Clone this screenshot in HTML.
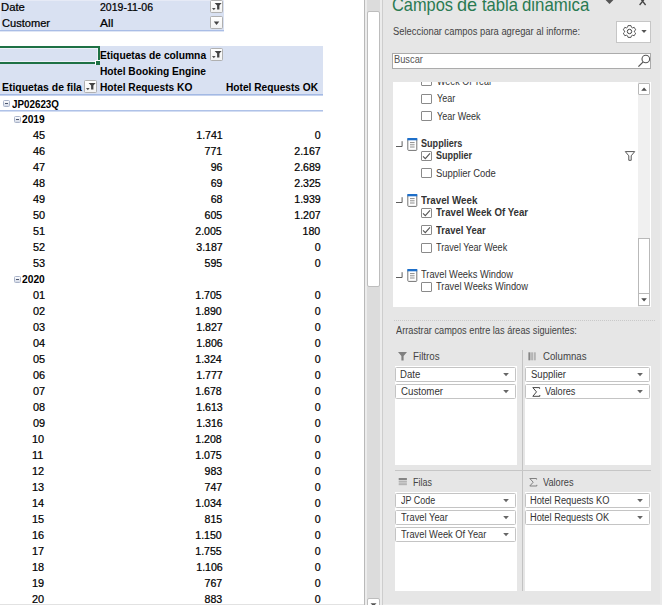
<!DOCTYPE html>
<html><head><meta charset="utf-8"><title>Pivot</title>
<style>
html,body{margin:0;padding:0;background:#fff;}
body{width:662px;height:605px;position:relative;overflow:hidden;font-family:"Liberation Sans",sans-serif;}
.b{position:absolute;}
.t{position:absolute;white-space:nowrap;line-height:16px;height:16px;display:block;}
</style></head><body>
<div class="b" style="left:0px;top:0px;width:224px;height:30px;background:#d9e1f2;"></div>
<div class="b" style="left:0px;top:30px;width:224px;height:1px;background:#a9bde6;"></div>
<div class="b" style="left:0px;top:31px;width:224px;height:1px;background:#dfe6f5;"></div>
<div class="b" style="left:0px;top:0px;width:224px;height:1px;background:#e6eaf6;"></div>
<div class="b" style="left:0px;top:1px;width:1px;height:29px;background:#e3e8f5;"></div>
<div class="b" style="left:0px;top:64px;width:1px;height:30px;background:#e3e8f5;"></div>
<div class="b" style="left:0px;top:604px;width:364px;height:1px;background:#e2e2e2;"></div>
<div class="b" style="left:0px;top:46px;width:323px;height:48px;background:#d9e1f2;"></div>
<div class="b" style="left:0px;top:94px;width:323px;height:1px;background:#a3b9e4;"></div>
<div class="b" style="left:0px;top:95px;width:323px;height:1px;background:#c6d3ee;"></div>
<div class="b" style="left:0px;top:110px;width:323px;height:1px;background:#afc2e8;"></div>
<div class="b" style="left:0px;top:111px;width:323px;height:1px;background:#d3ddf2;"></div>
<div class="b" style="left:0px;top:48px;width:98px;height:1px;background:#eef1f9;"></div>
<div class="b" style="left:97px;top:48px;width:1px;height:13px;background:#eef1f9;"></div>
<div class="b" style="left:0px;top:61px;width:97px;height:1px;background:#eef1f9;"></div>
<div class="b" style="left:0px;top:46px;width:100px;height:2px;background:#1e7145;"></div>
<div class="b" style="left:98px;top:46px;width:2px;height:14px;background:#1e7145;"></div>
<div class="b" style="left:0px;top:62px;width:95px;height:2px;background:#1e7145;"></div>
<div class="b" style="left:95px;top:60px;width:5px;height:5px;background:#fff;"></div>
<div class="b" style="left:96px;top:61px;width:4px;height:4px;background:#1e7145;"></div>
<div class="b" style="left:98px;top:46px;width:2px;height:14px;background:#1e7145;"></div>
<div class="b" style="left:0px;top:62px;width:95px;height:2px;background:#1e7145;"></div>
<span class="t" style="left:1.27px;top:0.00px;font-size:10.3px;color:#000;transform:scaleX(1.0951);transform-origin:0 0;-webkit-text-stroke:0.22px #000;">Date</span>
<span class="t" style="left:1.64px;top:16.00px;font-size:10.3px;color:#000;transform:scaleX(1.0762);transform-origin:0 0;-webkit-text-stroke:0.22px #000;">Customer</span>
<span class="t" style="left:99.97px;top:0.00px;font-size:10.3px;color:#000;transform:scaleX(1.0206);transform-origin:0 0;-webkit-text-stroke:0.22px #000;">2019-11-06</span>
<span class="t" style="left:100.48px;top:16.00px;font-size:10.3px;color:#000;transform:scaleX(1.1641);transform-origin:0 0;-webkit-text-stroke:0.22px #000;">All</span>
<span class="t" style="left:99.81px;top:48.00px;font-size:10.3px;font-weight:bold;color:#000;transform:scaleX(0.9969);transform-origin:0 0;">Etiquetas de columna</span>
<span class="t" style="left:99.82px;top:64.00px;font-size:10.3px;font-weight:bold;color:#000;transform:scaleX(0.9909);transform-origin:0 0;">Hotel Booking Engine</span>
<span class="t" style="left:99.82px;top:80.00px;font-size:10.3px;font-weight:bold;color:#000;transform:scaleX(0.9906);transform-origin:0 0;">Hotel Requests KO</span>
<span class="t" style="left:225.62px;top:80.00px;font-size:10.3px;font-weight:bold;color:#000;transform:scaleX(0.9870);transform-origin:0 0;">Hotel Requests OK</span>
<span class="t" style="left:1.50px;top:80.00px;font-size:10.3px;font-weight:bold;color:#000;transform:scaleX(1.0120);transform-origin:0 0;">Etiquetas de fila</span>
<span class="t" style="left:12.15px;top:97.00px;font-size:10.3px;font-weight:bold;color:#000;transform:scaleX(0.9535);transform-origin:0 0;">JP02623Q</span>
<span class="t" style="left:22.35px;top:112.00px;font-size:10.3px;font-weight:bold;color:#000;transform:scaleX(0.9921);transform-origin:0 0;">2019</span>
<div class="b" style="left:210px;top:0px;width:13px;height:13px;box-sizing:border-box;border:1px solid #b0b0b0;border-radius:1.5px;background:linear-gradient(#fff,#f3f3f3);"><svg width="13" height="13" viewBox="0 0 13 13" style="position:absolute;left:-1px;top:-1px"><path d="M4.6 3.0 H11.6 L9.4 5.6 V9.5 H7.1 V5.6 Z" fill="#444"/><path d="M2.0 8.0 H5.6 L3.8 10.2 Z" fill="#505050"/></svg></div>
<div class="b" style="left:210px;top:16px;width:13px;height:13px;box-sizing:border-box;border:1px solid #b0b0b0;border-radius:1.5px;background:linear-gradient(#fff,#f3f3f3);"><svg width="13" height="13" viewBox="0 0 13 13" style="position:absolute;left:-1px;top:-1px"><path d="M3.8 5.6 H9.3 L6.55 8.9 Z" fill="#444"/></svg></div>
<div class="b" style="left:210px;top:48px;width:13px;height:13px;box-sizing:border-box;border:1px solid #b0b0b0;border-radius:1.5px;background:linear-gradient(#fff,#f3f3f3);"><svg width="13" height="13" viewBox="0 0 13 13" style="position:absolute;left:-1px;top:-1px"><path d="M4.6 3.0 H11.6 L9.4 5.6 V9.5 H7.1 V5.6 Z" fill="#444"/><path d="M2.0 8.0 H5.6 L3.8 10.2 Z" fill="#505050"/></svg></div>
<div class="b" style="left:84px;top:80px;width:13px;height:13px;box-sizing:border-box;border:1px solid #b0b0b0;border-radius:1.5px;background:linear-gradient(#fff,#f3f3f3);"><svg width="13" height="13" viewBox="0 0 13 13" style="position:absolute;left:-1px;top:-1px"><path d="M4.6 3.0 H11.6 L9.4 5.6 V9.5 H7.1 V5.6 Z" fill="#444"/><path d="M2.0 8.0 H5.6 L3.8 10.2 Z" fill="#505050"/></svg></div>
<div class="b" style="left:3px;top:100px;width:7px;height:7px;box-sizing:border-box;border:1px solid #a9b3c9;background:linear-gradient(#fdfdfe,#d3d9e6);border-radius:1.5px"><div style="position:absolute;left:1px;top:2px;width:3px;height:1px;background:#4a556e"></div></div>
<div class="b" style="left:13.5px;top:116px;width:7px;height:7px;box-sizing:border-box;border:1px solid #a9b3c9;background:linear-gradient(#fdfdfe,#d3d9e6);border-radius:1.5px"><div style="position:absolute;left:1px;top:2px;width:3px;height:1px;background:#4a556e"></div></div>
<div class="b" style="left:13.5px;top:276px;width:7px;height:7px;box-sizing:border-box;border:1px solid #a9b3c9;background:linear-gradient(#fdfdfe,#d3d9e6);border-radius:1.5px"><div style="position:absolute;left:1px;top:2px;width:3px;height:1px;background:#4a556e"></div></div>
<span class="t" style="left:32.75px;top:128.00px;font-size:10.3px;color:#000;transform:scaleX(1.0600);transform-origin:0 0;-webkit-text-stroke:0.22px #000;">45</span>
<span class="t" style="right:439.68px;top:128.00px;font-size:10.3px;color:#000;transform:scaleX(1.0300);transform-origin:100% 0;-webkit-text-stroke:0.22px #000;">1.741</span>
<span class="t" style="right:341.39px;top:128.00px;font-size:10.3px;color:#000;transform:scaleX(1.0300);transform-origin:100% 0;-webkit-text-stroke:0.22px #000;">0</span>
<span class="t" style="left:32.75px;top:144.00px;font-size:10.3px;color:#000;transform:scaleX(1.0600);transform-origin:0 0;-webkit-text-stroke:0.22px #000;">46</span>
<span class="t" style="right:439.68px;top:144.00px;font-size:10.3px;color:#000;transform:scaleX(1.0300);transform-origin:100% 0;-webkit-text-stroke:0.22px #000;">771</span>
<span class="t" style="right:341.27px;top:144.00px;font-size:10.3px;color:#000;transform:scaleX(1.0300);transform-origin:100% 0;-webkit-text-stroke:0.22px #000;">2.167</span>
<span class="t" style="left:32.75px;top:160.00px;font-size:10.3px;color:#000;transform:scaleX(1.0600);transform-origin:0 0;-webkit-text-stroke:0.22px #000;">47</span>
<span class="t" style="right:439.73px;top:160.00px;font-size:10.3px;color:#000;transform:scaleX(1.0300);transform-origin:100% 0;-webkit-text-stroke:0.22px #000;">96</span>
<span class="t" style="right:341.30px;top:160.00px;font-size:10.3px;color:#000;transform:scaleX(1.0300);transform-origin:100% 0;-webkit-text-stroke:0.22px #000;">2.689</span>
<span class="t" style="left:32.75px;top:176.00px;font-size:10.3px;color:#000;transform:scaleX(1.0600);transform-origin:0 0;-webkit-text-stroke:0.22px #000;">48</span>
<span class="t" style="right:439.70px;top:176.00px;font-size:10.3px;color:#000;transform:scaleX(1.0300);transform-origin:100% 0;-webkit-text-stroke:0.22px #000;">69</span>
<span class="t" style="right:341.35px;top:176.00px;font-size:10.3px;color:#000;transform:scaleX(1.0300);transform-origin:100% 0;-webkit-text-stroke:0.22px #000;">2.325</span>
<span class="t" style="left:32.75px;top:192.00px;font-size:10.3px;color:#000;transform:scaleX(1.0600);transform-origin:0 0;-webkit-text-stroke:0.22px #000;">49</span>
<span class="t" style="right:439.74px;top:192.00px;font-size:10.3px;color:#000;transform:scaleX(1.0300);transform-origin:100% 0;-webkit-text-stroke:0.22px #000;">68</span>
<span class="t" style="right:341.30px;top:192.00px;font-size:10.3px;color:#000;transform:scaleX(1.0300);transform-origin:100% 0;-webkit-text-stroke:0.22px #000;">1.939</span>
<span class="t" style="left:32.56px;top:208.00px;font-size:10.3px;color:#000;transform:scaleX(1.0600);transform-origin:0 0;-webkit-text-stroke:0.22px #000;">50</span>
<span class="t" style="right:439.75px;top:208.00px;font-size:10.3px;color:#000;transform:scaleX(1.0300);transform-origin:100% 0;-webkit-text-stroke:0.22px #000;">605</span>
<span class="t" style="right:341.27px;top:208.00px;font-size:10.3px;color:#000;transform:scaleX(1.0300);transform-origin:100% 0;-webkit-text-stroke:0.22px #000;">1.207</span>
<span class="t" style="left:32.56px;top:224.00px;font-size:10.3px;color:#000;transform:scaleX(1.0600);transform-origin:0 0;-webkit-text-stroke:0.22px #000;">51</span>
<span class="t" style="right:439.75px;top:224.00px;font-size:10.3px;color:#000;transform:scaleX(1.0300);transform-origin:100% 0;-webkit-text-stroke:0.22px #000;">2.005</span>
<span class="t" style="right:341.39px;top:224.00px;font-size:10.3px;color:#000;transform:scaleX(1.0300);transform-origin:100% 0;-webkit-text-stroke:0.22px #000;">180</span>
<span class="t" style="left:32.56px;top:240.00px;font-size:10.3px;color:#000;transform:scaleX(1.0600);transform-origin:0 0;-webkit-text-stroke:0.22px #000;">52</span>
<span class="t" style="right:439.67px;top:240.00px;font-size:10.3px;color:#000;transform:scaleX(1.0300);transform-origin:100% 0;-webkit-text-stroke:0.22px #000;">3.187</span>
<span class="t" style="right:341.39px;top:240.00px;font-size:10.3px;color:#000;transform:scaleX(1.0300);transform-origin:100% 0;-webkit-text-stroke:0.22px #000;">0</span>
<span class="t" style="left:32.56px;top:256.00px;font-size:10.3px;color:#000;transform:scaleX(1.0600);transform-origin:0 0;-webkit-text-stroke:0.22px #000;">53</span>
<span class="t" style="right:439.75px;top:256.00px;font-size:10.3px;color:#000;transform:scaleX(1.0300);transform-origin:100% 0;-webkit-text-stroke:0.22px #000;">595</span>
<span class="t" style="right:341.39px;top:256.00px;font-size:10.3px;color:#000;transform:scaleX(1.0300);transform-origin:100% 0;-webkit-text-stroke:0.22px #000;">0</span>
<span class="t" style="left:22.35px;top:272.00px;font-size:10.3px;font-weight:bold;color:#000;transform:scaleX(0.9939);transform-origin:0 0;">2020</span>
<span class="t" style="left:32.57px;top:288.00px;font-size:10.3px;color:#000;transform:scaleX(1.0600);transform-origin:0 0;-webkit-text-stroke:0.22px #000;">01</span>
<span class="t" style="right:439.75px;top:288.00px;font-size:10.3px;color:#000;transform:scaleX(1.0300);transform-origin:100% 0;-webkit-text-stroke:0.22px #000;">1.705</span>
<span class="t" style="right:341.39px;top:288.00px;font-size:10.3px;color:#000;transform:scaleX(1.0300);transform-origin:100% 0;-webkit-text-stroke:0.22px #000;">0</span>
<span class="t" style="left:32.57px;top:304.00px;font-size:10.3px;color:#000;transform:scaleX(1.0600);transform-origin:0 0;-webkit-text-stroke:0.22px #000;">02</span>
<span class="t" style="right:439.79px;top:304.00px;font-size:10.3px;color:#000;transform:scaleX(1.0300);transform-origin:100% 0;-webkit-text-stroke:0.22px #000;">1.890</span>
<span class="t" style="right:341.39px;top:304.00px;font-size:10.3px;color:#000;transform:scaleX(1.0300);transform-origin:100% 0;-webkit-text-stroke:0.22px #000;">0</span>
<span class="t" style="left:32.57px;top:320.00px;font-size:10.3px;color:#000;transform:scaleX(1.0600);transform-origin:0 0;-webkit-text-stroke:0.22px #000;">03</span>
<span class="t" style="right:439.67px;top:320.00px;font-size:10.3px;color:#000;transform:scaleX(1.0300);transform-origin:100% 0;-webkit-text-stroke:0.22px #000;">1.827</span>
<span class="t" style="right:341.39px;top:320.00px;font-size:10.3px;color:#000;transform:scaleX(1.0300);transform-origin:100% 0;-webkit-text-stroke:0.22px #000;">0</span>
<span class="t" style="left:32.57px;top:336.00px;font-size:10.3px;color:#000;transform:scaleX(1.0600);transform-origin:0 0;-webkit-text-stroke:0.22px #000;">04</span>
<span class="t" style="right:439.73px;top:336.00px;font-size:10.3px;color:#000;transform:scaleX(1.0300);transform-origin:100% 0;-webkit-text-stroke:0.22px #000;">1.806</span>
<span class="t" style="right:341.39px;top:336.00px;font-size:10.3px;color:#000;transform:scaleX(1.0300);transform-origin:100% 0;-webkit-text-stroke:0.22px #000;">0</span>
<span class="t" style="left:32.57px;top:352.00px;font-size:10.3px;color:#000;transform:scaleX(1.0600);transform-origin:0 0;-webkit-text-stroke:0.22px #000;">05</span>
<span class="t" style="right:439.89px;top:352.00px;font-size:10.3px;color:#000;transform:scaleX(1.0300);transform-origin:100% 0;-webkit-text-stroke:0.22px #000;">1.324</span>
<span class="t" style="right:341.39px;top:352.00px;font-size:10.3px;color:#000;transform:scaleX(1.0300);transform-origin:100% 0;-webkit-text-stroke:0.22px #000;">0</span>
<span class="t" style="left:32.57px;top:368.00px;font-size:10.3px;color:#000;transform:scaleX(1.0600);transform-origin:0 0;-webkit-text-stroke:0.22px #000;">06</span>
<span class="t" style="right:439.67px;top:368.00px;font-size:10.3px;color:#000;transform:scaleX(1.0300);transform-origin:100% 0;-webkit-text-stroke:0.22px #000;">1.777</span>
<span class="t" style="right:341.39px;top:368.00px;font-size:10.3px;color:#000;transform:scaleX(1.0300);transform-origin:100% 0;-webkit-text-stroke:0.22px #000;">0</span>
<span class="t" style="left:32.57px;top:384.00px;font-size:10.3px;color:#000;transform:scaleX(1.0600);transform-origin:0 0;-webkit-text-stroke:0.22px #000;">07</span>
<span class="t" style="right:439.74px;top:384.00px;font-size:10.3px;color:#000;transform:scaleX(1.0300);transform-origin:100% 0;-webkit-text-stroke:0.22px #000;">1.678</span>
<span class="t" style="right:341.39px;top:384.00px;font-size:10.3px;color:#000;transform:scaleX(1.0300);transform-origin:100% 0;-webkit-text-stroke:0.22px #000;">0</span>
<span class="t" style="left:32.57px;top:400.00px;font-size:10.3px;color:#000;transform:scaleX(1.0600);transform-origin:0 0;-webkit-text-stroke:0.22px #000;">08</span>
<span class="t" style="right:439.73px;top:400.00px;font-size:10.3px;color:#000;transform:scaleX(1.0300);transform-origin:100% 0;-webkit-text-stroke:0.22px #000;">1.613</span>
<span class="t" style="right:341.39px;top:400.00px;font-size:10.3px;color:#000;transform:scaleX(1.0300);transform-origin:100% 0;-webkit-text-stroke:0.22px #000;">0</span>
<span class="t" style="left:32.57px;top:416.00px;font-size:10.3px;color:#000;transform:scaleX(1.0600);transform-origin:0 0;-webkit-text-stroke:0.22px #000;">09</span>
<span class="t" style="right:439.73px;top:416.00px;font-size:10.3px;color:#000;transform:scaleX(1.0300);transform-origin:100% 0;-webkit-text-stroke:0.22px #000;">1.316</span>
<span class="t" style="right:341.39px;top:416.00px;font-size:10.3px;color:#000;transform:scaleX(1.0300);transform-origin:100% 0;-webkit-text-stroke:0.22px #000;">0</span>
<span class="t" style="left:32.17px;top:432.00px;font-size:10.3px;color:#000;transform:scaleX(1.0600);transform-origin:0 0;-webkit-text-stroke:0.22px #000;">10</span>
<span class="t" style="right:439.74px;top:432.00px;font-size:10.3px;color:#000;transform:scaleX(1.0300);transform-origin:100% 0;-webkit-text-stroke:0.22px #000;">1.208</span>
<span class="t" style="right:341.39px;top:432.00px;font-size:10.3px;color:#000;transform:scaleX(1.0300);transform-origin:100% 0;-webkit-text-stroke:0.22px #000;">0</span>
<span class="t" style="left:32.17px;top:448.00px;font-size:10.3px;color:#000;transform:scaleX(1.0600);transform-origin:0 0;-webkit-text-stroke:0.22px #000;">11</span>
<span class="t" style="right:439.75px;top:448.00px;font-size:10.3px;color:#000;transform:scaleX(1.0300);transform-origin:100% 0;-webkit-text-stroke:0.22px #000;">1.075</span>
<span class="t" style="right:341.39px;top:448.00px;font-size:10.3px;color:#000;transform:scaleX(1.0300);transform-origin:100% 0;-webkit-text-stroke:0.22px #000;">0</span>
<span class="t" style="left:32.17px;top:464.00px;font-size:10.3px;color:#000;transform:scaleX(1.0600);transform-origin:0 0;-webkit-text-stroke:0.22px #000;">12</span>
<span class="t" style="right:439.73px;top:464.00px;font-size:10.3px;color:#000;transform:scaleX(1.0300);transform-origin:100% 0;-webkit-text-stroke:0.22px #000;">983</span>
<span class="t" style="right:341.39px;top:464.00px;font-size:10.3px;color:#000;transform:scaleX(1.0300);transform-origin:100% 0;-webkit-text-stroke:0.22px #000;">0</span>
<span class="t" style="left:32.17px;top:480.00px;font-size:10.3px;color:#000;transform:scaleX(1.0600);transform-origin:0 0;-webkit-text-stroke:0.22px #000;">13</span>
<span class="t" style="right:439.67px;top:480.00px;font-size:10.3px;color:#000;transform:scaleX(1.0300);transform-origin:100% 0;-webkit-text-stroke:0.22px #000;">747</span>
<span class="t" style="right:341.39px;top:480.00px;font-size:10.3px;color:#000;transform:scaleX(1.0300);transform-origin:100% 0;-webkit-text-stroke:0.22px #000;">0</span>
<span class="t" style="left:32.17px;top:496.00px;font-size:10.3px;color:#000;transform:scaleX(1.0600);transform-origin:0 0;-webkit-text-stroke:0.22px #000;">14</span>
<span class="t" style="right:439.89px;top:496.00px;font-size:10.3px;color:#000;transform:scaleX(1.0300);transform-origin:100% 0;-webkit-text-stroke:0.22px #000;">1.034</span>
<span class="t" style="right:341.39px;top:496.00px;font-size:10.3px;color:#000;transform:scaleX(1.0300);transform-origin:100% 0;-webkit-text-stroke:0.22px #000;">0</span>
<span class="t" style="left:32.17px;top:512.00px;font-size:10.3px;color:#000;transform:scaleX(1.0600);transform-origin:0 0;-webkit-text-stroke:0.22px #000;">15</span>
<span class="t" style="right:439.75px;top:512.00px;font-size:10.3px;color:#000;transform:scaleX(1.0300);transform-origin:100% 0;-webkit-text-stroke:0.22px #000;">815</span>
<span class="t" style="right:341.39px;top:512.00px;font-size:10.3px;color:#000;transform:scaleX(1.0300);transform-origin:100% 0;-webkit-text-stroke:0.22px #000;">0</span>
<span class="t" style="left:32.17px;top:528.00px;font-size:10.3px;color:#000;transform:scaleX(1.0600);transform-origin:0 0;-webkit-text-stroke:0.22px #000;">16</span>
<span class="t" style="right:439.79px;top:528.00px;font-size:10.3px;color:#000;transform:scaleX(1.0300);transform-origin:100% 0;-webkit-text-stroke:0.22px #000;">1.150</span>
<span class="t" style="right:341.39px;top:528.00px;font-size:10.3px;color:#000;transform:scaleX(1.0300);transform-origin:100% 0;-webkit-text-stroke:0.22px #000;">0</span>
<span class="t" style="left:32.17px;top:544.00px;font-size:10.3px;color:#000;transform:scaleX(1.0600);transform-origin:0 0;-webkit-text-stroke:0.22px #000;">17</span>
<span class="t" style="right:439.75px;top:544.00px;font-size:10.3px;color:#000;transform:scaleX(1.0300);transform-origin:100% 0;-webkit-text-stroke:0.22px #000;">1.755</span>
<span class="t" style="right:341.39px;top:544.00px;font-size:10.3px;color:#000;transform:scaleX(1.0300);transform-origin:100% 0;-webkit-text-stroke:0.22px #000;">0</span>
<span class="t" style="left:32.17px;top:560.00px;font-size:10.3px;color:#000;transform:scaleX(1.0600);transform-origin:0 0;-webkit-text-stroke:0.22px #000;">18</span>
<span class="t" style="right:439.73px;top:560.00px;font-size:10.3px;color:#000;transform:scaleX(1.0300);transform-origin:100% 0;-webkit-text-stroke:0.22px #000;">1.106</span>
<span class="t" style="right:341.39px;top:560.00px;font-size:10.3px;color:#000;transform:scaleX(1.0300);transform-origin:100% 0;-webkit-text-stroke:0.22px #000;">0</span>
<span class="t" style="left:32.17px;top:576.00px;font-size:10.3px;color:#000;transform:scaleX(1.0600);transform-origin:0 0;-webkit-text-stroke:0.22px #000;">19</span>
<span class="t" style="right:439.67px;top:576.00px;font-size:10.3px;color:#000;transform:scaleX(1.0300);transform-origin:100% 0;-webkit-text-stroke:0.22px #000;">767</span>
<span class="t" style="right:341.39px;top:576.00px;font-size:10.3px;color:#000;transform:scaleX(1.0300);transform-origin:100% 0;-webkit-text-stroke:0.22px #000;">0</span>
<span class="t" style="left:32.45px;top:592.00px;font-size:10.3px;color:#000;transform:scaleX(1.0600);transform-origin:0 0;-webkit-text-stroke:0.22px #000;">20</span>
<span class="t" style="right:439.73px;top:592.00px;font-size:10.3px;color:#000;transform:scaleX(1.0300);transform-origin:100% 0;-webkit-text-stroke:0.22px #000;">883</span>
<span class="t" style="right:341.39px;top:592.00px;font-size:10.3px;color:#000;transform:scaleX(1.0300);transform-origin:100% 0;-webkit-text-stroke:0.22px #000;">0</span>
<div class="b" style="left:364px;top:0px;width:18px;height:605px;background:#dcdcdc;"></div>
<div class="b" style="left:364px;top:0px;width:1px;height:605px;background:#b9b9b9;"></div>
<div class="b" style="left:365px;top:0px;width:2px;height:605px;background:#ececec;"></div>
<div class="b" style="left:380px;top:0px;width:2px;height:605px;background:#ececec;"></div>
<div class="b" style="left:382px;top:0px;width:1px;height:605px;background:#cdcdcd;"></div>
<div class="b" style="left:367px;top:11px;width:13px;height:276px;background:#fff;border:1px solid #bdbdbd;box-sizing:border-box;border-radius:2px"></div>
<div class="b" style="left:367px;top:598px;width:13px;height:12px;background:#fff;border:1px solid #bdbdbd;box-sizing:border-box;border-radius:2px"></div>
<svg class="b" style="left:370px;top:603px" width="7" height="3"><path d="M0.5 0.3H6.5L3.5 3.3Z" fill="#555"/></svg>
<div class="b" style="left:383px;top:0px;width:279px;height:605px;background:#e6e6e6;"></div>
<div class="b" style="left:660px;top:0px;width:2px;height:605px;background:#ebebeb;"></div>
<div class="b" style="left:383px;top:604px;width:279px;height:1px;background:#ececec;"></div>
<span class="t" style="left:391.97px;top:-3.00px;font-size:18.5px;color:#2a7a52;transform:scaleX(0.8859);transform-origin:0 0;">Campos</span>
<span class="t" style="left:457.24px;top:-3.00px;font-size:18.5px;color:#2a7a52;transform:scaleX(0.9800);transform-origin:0 0;">de</span>
<span class="t" style="left:481.75px;top:-3.00px;font-size:18.5px;color:#2a7a52;transform:scaleX(0.8987);transform-origin:0 0;">tabla</span>
<span class="t" style="left:521.59px;top:-3.00px;font-size:18.5px;color:#2a7a52;transform:scaleX(0.9091);transform-origin:0 0;">dinamica</span>
<svg class="b" style="left:605px;top:0" width="10" height="5"><path d="M0.6 0H8.4L4.5 3.9Z" fill="#555"/></svg>
<svg class="b" style="left:638px;top:0" width="10" height="7"><path d="M1.6 -2.5L7.6 5M7.6 -2.5L1.6 5" stroke="#444" stroke-width="1.3" fill="none"/></svg>
<span class="t" style="left:393.37px;top:24.00px;font-size:10px;color:#444;transform:scaleX(0.9375);transform-origin:0 0;">Seleccionar campos para agregar al informe:</span>
<div class="b" style="left:616px;top:21px;width:35px;height:22px;background:#fff;border:1px solid #c6c6c6;box-sizing:border-box;"></div>
<svg class="b" style="left:622px;top:24px" width="15" height="15" viewBox="-7.5 -7.5 15 15">
<path d="M-1.6 -6.3 H1.6 L2.2 -4.4 L3.4 -3.7 L5.3 -4.3 L6.9 -1.5 L5.5 -0.1 V1 L6.9 2.3 L5.3 5.1 L3.4 4.6 L2.2 5.2 L1.6 7 H-1.6 L-2.2 5.2 L-3.4 4.6 L-5.3 5.1 L-6.9 2.3 L-5.5 1 V-0.1 L-6.9 -1.5 L-5.3 -4.3 L-3.4 -3.7 L-2.2 -4.4 Z" transform="translate(0,-0.33) scale(0.89)" fill="none" stroke="#444" stroke-width="1" stroke-linejoin="round"/>
<circle cx="0" cy="0" r="2.2" fill="none" stroke="#444" stroke-width="1"/></svg>
<svg class="b" style="left:641px;top:30px" width="7" height="4"><path d="M0.3 0H5.7L3 3Z" fill="#555"/></svg>
<div class="b" style="left:392px;top:53px;width:259px;height:16px;background:#fff;border:1px solid #ababab;box-sizing:border-box;"></div>
<span class="t" style="left:393.94px;top:52.00px;font-size:10px;color:#555;transform:scaleX(0.9291);transform-origin:0 0;">Buscar</span>
<svg class="b" style="left:636px;top:53px" width="16" height="16" viewBox="0 0 16 16"><circle cx="9.8" cy="6" r="3.8" fill="none" stroke="#555" stroke-width="1.1"/><path d="M7.2 8.9L2.4 13.6" stroke="#555" stroke-width="1.3"/></svg>
<div class="b" style="left:393px;top:82px;width:258px;height:225px;background:#fff;"></div>
<div class="b" style="left:638px;top:82px;width:12px;height:225px;background:#f0f0f0;"></div>
<div class="b" style="left:638px;top:83px;width:12px;height:12px;background:#fff;border:1px solid #b9b9b9;box-sizing:border-box;border-radius:1px"></div>
<svg class="b" style="left:641px;top:87px" width="7" height="4"><path d="M0.2 3.8H5.9L3.05 0.4Z" fill="#4d4d4d"/></svg>
<div class="b" style="left:638px;top:238px;width:12px;height:56px;background:#fff;border:1px solid #b9b9b9;box-sizing:border-box;"></div>
<div class="b" style="left:638px;top:293px;width:12px;height:13px;background:#fff;border:1px solid #b9b9b9;box-sizing:border-box;"></div>
<svg class="b" style="left:641px;top:298px" width="7" height="4"><path d="M0.2 0.3H5.9L3.05 3.6Z" fill="#4d4d4d"/></svg>
<div class="b" style="left:393px;top:82px;width:245px;height:10px;overflow:hidden">
<div class="b" style="left:28px;top:-6px;width:11px;height:10px;box-sizing:border-box;border:1px solid #8a8a8a;border-radius:1px;background:#fff"></div>
</div>
<div class="b" style="left:0;top:82px;width:638px;height:20px;overflow:hidden">
<span class="t" style="left:436.8px;top:-8.00px;font-size:10px;color:#333;transform:scaleX(0.8940);transform-origin:0 0">Week Of Year</span>
</div>
<div class="b" style="left:421px;top:94px;width:11px;height:10px;box-sizing:border-box;border:1px solid #8a8a8a;border-radius:1px;background:#fff"></div>
<span class="t" style="left:436.60px;top:91.00px;font-size:10px;color:#333;transform:scaleX(0.8981);transform-origin:0 0;">Year</span>
<div class="b" style="left:421px;top:111px;width:11px;height:10px;box-sizing:border-box;border:1px solid #8a8a8a;border-radius:1px;background:#fff"></div>
<span class="t" style="left:436.60px;top:109.00px;font-size:10px;color:#333;transform:scaleX(0.9012);transform-origin:0 0;">Year Week</span>
<svg class="b" style="left:396px;top:140.5px" width="7" height="6"><path d="M0 5.5H6.1V0.2" fill="none" stroke="#5e5e5e" stroke-width="1"/></svg>
<svg class="b" style="left:407px;top:137.5px" width="11" height="14" viewBox="0 0 11 14"><rect x="0.8" y="1" width="9" height="11.4" rx="0.8" fill="#fff" stroke="#747474" stroke-width="1"/><rect x="0.3" y="0" width="10" height="2.3" fill="#1e6fc9"/><path d="M3 4.6H7.6M3 6.8H7.6M3 9H7.6" stroke="#8c8c8c" stroke-width="1"/></svg>
<span class="t" style="left:421.04px;top:136.00px;font-size:10px;font-weight:bold;color:#333;transform:scaleX(0.9071);transform-origin:0 0;">Suppliers</span>
<div class="b" style="left:421px;top:151px;width:11px;height:10px;box-sizing:border-box;border:1px solid #8a8a8a;border-radius:1px;background:#fff"><svg width="10" height="10" viewBox="0 0 10 10" style="position:absolute;left:-1px;top:-1px"><path d="M2 5.3L4.3 7.6L9 2.3" fill="none" stroke="#555" stroke-width="1.1"/></svg></div>
<span class="t" style="left:436.34px;top:148.00px;font-size:10px;font-weight:bold;color:#333;transform:scaleX(0.9023);transform-origin:0 0;">Supplier</span>
<div class="b" style="left:421px;top:168px;width:11px;height:10px;box-sizing:border-box;border:1px solid #8a8a8a;border-radius:1px;background:#fff"></div>
<span class="t" style="left:436.17px;top:166.00px;font-size:10px;color:#333;transform:scaleX(0.9444);transform-origin:0 0;">Supplier Code</span>
<svg class="b" style="left:396px;top:197px" width="7" height="6"><path d="M0 5.5H6.1V0.2" fill="none" stroke="#5e5e5e" stroke-width="1"/></svg>
<svg class="b" style="left:407px;top:194px" width="11" height="14" viewBox="0 0 11 14"><rect x="0.8" y="1" width="9" height="11.4" rx="0.8" fill="#fff" stroke="#747474" stroke-width="1"/><rect x="0.3" y="0" width="10" height="2.3" fill="#1e6fc9"/><path d="M3 4.6H7.6M3 6.8H7.6M3 9H7.6" stroke="#8c8c8c" stroke-width="1"/></svg>
<span class="t" style="left:421.19px;top:193.00px;font-size:10px;font-weight:bold;color:#333;transform:scaleX(0.9786);transform-origin:0 0;">Travel Week</span>
<div class="b" style="left:421px;top:208px;width:11px;height:10px;box-sizing:border-box;border:1px solid #8a8a8a;border-radius:1px;background:#fff"><svg width="10" height="10" viewBox="0 0 10 10" style="position:absolute;left:-1px;top:-1px"><path d="M2 5.3L4.3 7.6L9 2.3" fill="none" stroke="#555" stroke-width="1.1"/></svg></div>
<span class="t" style="left:436.49px;top:205.00px;font-size:10px;font-weight:bold;color:#333;transform:scaleX(0.9665);transform-origin:0 0;">Travel Week Of Year</span>
<div class="b" style="left:421px;top:225px;width:11px;height:10px;box-sizing:border-box;border:1px solid #8a8a8a;border-radius:1px;background:#fff"><svg width="10" height="10" viewBox="0 0 10 10" style="position:absolute;left:-1px;top:-1px"><path d="M2 5.3L4.3 7.6L9 2.3" fill="none" stroke="#555" stroke-width="1.1"/></svg></div>
<span class="t" style="left:436.49px;top:223.00px;font-size:10px;font-weight:bold;color:#333;transform:scaleX(0.9431);transform-origin:0 0;">Travel Year</span>
<div class="b" style="left:421px;top:243px;width:11px;height:10px;box-sizing:border-box;border:1px solid #8a8a8a;border-radius:1px;background:#fff"></div>
<span class="t" style="left:436.40px;top:240.00px;font-size:10px;color:#333;transform:scaleX(0.9083);transform-origin:0 0;">Travel Year Week</span>
<svg class="b" style="left:396px;top:272px" width="7" height="6"><path d="M0 5.5H6.1V0.2" fill="none" stroke="#5e5e5e" stroke-width="1"/></svg>
<svg class="b" style="left:407px;top:269px" width="11" height="14" viewBox="0 0 11 14"><rect x="0.8" y="1" width="9" height="11.4" rx="0.8" fill="#fff" stroke="#747474" stroke-width="1"/><rect x="0.3" y="0" width="10" height="2.3" fill="#1e6fc9"/><path d="M3 4.6H7.6M3 6.8H7.6M3 9H7.6" stroke="#8c8c8c" stroke-width="1"/></svg>
<span class="t" style="left:421.09px;top:267.00px;font-size:10px;color:#333;transform:scaleX(0.9299);transform-origin:0 0;">Travel Weeks Window</span>
<div class="b" style="left:421px;top:282px;width:11px;height:10px;box-sizing:border-box;border:1px solid #8a8a8a;border-radius:1px;background:#fff"></div>
<span class="t" style="left:436.39px;top:279.00px;font-size:10px;color:#333;transform:scaleX(0.9299);transform-origin:0 0;">Travel Weeks Window</span>
<svg class="b" style="left:624px;top:150px" width="12" height="12" viewBox="0 0 12 12"><path d="M1.3 1.6H10.7L7.2 5.8V10.3H4.8V5.8Z" fill="none" stroke="#555" stroke-width="1" stroke-linejoin="round"/></svg>
<div class="b" style="left:394px;top:320px;width:261px;height:1px;background:repeating-linear-gradient(90deg,#c9c9c9 0 1px,transparent 1px 2px)"></div>
<span class="t" style="left:395.98px;top:323.00px;font-size:10px;color:#444;transform:scaleX(0.9218);transform-origin:0 0;">Arrastrar campos entre las áreas siguientes:</span>
<div class="b" style="left:395px;top:366px;width:122px;height:99px;background:#fff;"></div>
<div class="b" style="left:525px;top:366px;width:126px;height:99px;background:#fff;"></div>
<div class="b" style="left:395px;top:492px;width:122px;height:99px;background:#fff;"></div>
<div class="b" style="left:525px;top:492px;width:126px;height:99px;background:#fff;"></div>
<div class="b" style="left:522px;top:350px;width:1px;height:241px;background:#c3c3c3;"></div>
<div class="b" style="left:395px;top:469.5px;width:256px;height:1px;background:#c6c6c6;"></div>
<div class="b" style="left:395px;top:367px;width:121px;height:15px;background:#fff;border:1px solid #c4c4c4;box-sizing:border-box;border-radius:1.5px;"></div>
<span class="t" style="left:400.22px;top:367.00px;font-size:10px;color:#333;transform:scaleX(0.9568);transform-origin:0 0;">Date</span>
<svg class="b" style="left:502.5px;top:373px" width="7" height="4"><path d="M0.2 0H5.9L3.05 3.2Z" fill="#666"/></svg>
<div class="b" style="left:395px;top:384px;width:121px;height:15px;background:#fff;border:1px solid #c4c4c4;box-sizing:border-box;border-radius:1.5px;"></div>
<span class="t" style="left:400.51px;top:384.00px;font-size:10px;color:#333;transform:scaleX(0.9702);transform-origin:0 0;">Customer</span>
<svg class="b" style="left:502.5px;top:390px" width="7" height="4"><path d="M0.2 0H5.9L3.05 3.2Z" fill="#666"/></svg>
<div class="b" style="left:525px;top:367px;width:125px;height:15px;background:#fff;border:1px solid #c4c4c4;box-sizing:border-box;border-radius:1.5px;"></div>
<span class="t" style="left:530.57px;top:367.00px;font-size:10px;color:#333;transform:scaleX(0.9537);transform-origin:0 0;">Supplier</span>
<svg class="b" style="left:636.5px;top:373px" width="7" height="4"><path d="M0.2 0H5.9L3.05 3.2Z" fill="#666"/></svg>
<div class="b" style="left:525px;top:384px;width:125px;height:15px;background:#fff;border:1px solid #c4c4c4;box-sizing:border-box;border-radius:1.5px;"></div>
<svg class="b" style="left:532px;top:387px" width="9" height="10" viewBox="0 0 9 10"><path d="M7.6 1.8V0.6H0.8L4.5 4.9L0.8 9.3H7.8V8" fill="none" stroke="#444" stroke-width="1"/></svg>
<span class="t" style="left:545.26px;top:384.00px;font-size:10px;color:#333;transform:scaleX(0.9158);transform-origin:0 0;">Valores</span>
<svg class="b" style="left:636.5px;top:390px" width="7" height="4"><path d="M0.2 0H5.9L3.05 3.2Z" fill="#666"/></svg>
<div class="b" style="left:395px;top:493px;width:121px;height:15px;background:#fff;border:1px solid #c4c4c4;box-sizing:border-box;border-radius:1.5px;"></div>
<span class="t" style="left:400.86px;top:493.00px;font-size:10px;color:#333;transform:scaleX(0.8942);transform-origin:0 0;">JP Code</span>
<svg class="b" style="left:502.5px;top:499px" width="7" height="4"><path d="M0.2 0H5.9L3.05 3.2Z" fill="#666"/></svg>
<div class="b" style="left:395px;top:510px;width:121px;height:15px;background:#fff;border:1px solid #c4c4c4;box-sizing:border-box;border-radius:1.5px;"></div>
<span class="t" style="left:400.79px;top:510.00px;font-size:10px;color:#333;transform:scaleX(0.9333);transform-origin:0 0;">Travel Year</span>
<svg class="b" style="left:502.5px;top:516px" width="7" height="4"><path d="M0.2 0H5.9L3.05 3.2Z" fill="#666"/></svg>
<div class="b" style="left:395px;top:527px;width:121px;height:15px;background:#fff;border:1px solid #c4c4c4;box-sizing:border-box;border-radius:1.5px;"></div>
<span class="t" style="left:400.79px;top:527.00px;font-size:10px;color:#333;transform:scaleX(0.9308);transform-origin:0 0;">Travel Week Of Year</span>
<svg class="b" style="left:502.5px;top:533px" width="7" height="4"><path d="M0.2 0H5.9L3.05 3.2Z" fill="#666"/></svg>
<div class="b" style="left:525px;top:493px;width:125px;height:15px;background:#fff;border:1px solid #c4c4c4;box-sizing:border-box;border-radius:1.5px;"></div>
<span class="t" style="left:530.24px;top:493.00px;font-size:10px;color:#333;transform:scaleX(0.9277);transform-origin:0 0;">Hotel Requests KO</span>
<svg class="b" style="left:636.5px;top:499px" width="7" height="4"><path d="M0.2 0H5.9L3.05 3.2Z" fill="#666"/></svg>
<div class="b" style="left:525px;top:510px;width:125px;height:15px;background:#fff;border:1px solid #c4c4c4;box-sizing:border-box;border-radius:1.5px;"></div>
<span class="t" style="left:530.24px;top:510.00px;font-size:10px;color:#333;transform:scaleX(0.9237);transform-origin:0 0;">Hotel Requests OK</span>
<svg class="b" style="left:636.5px;top:516px" width="7" height="4"><path d="M0.2 0H5.9L3.05 3.2Z" fill="#666"/></svg>
<svg class="b" style="left:398px;top:352px" width="9" height="9" viewBox="0 0 9 9"><path d="M0 0H9L5.6 4V8.5H3.4V4Z" fill="#808080"/></svg>
<span class="t" style="left:413.00px;top:349.00px;font-size:10px;color:#444;transform:scaleX(0.9754);transform-origin:0 0;">Filtros</span>
<svg class="b" style="left:528px;top:352px" width="9" height="9"><rect x="0.4" y="0.3" width="2" height="8" fill="#858585"/><rect x="3.1" y="0.3" width="2" height="8" fill="#b4b4b4"/><rect x="5.8" y="0.3" width="2" height="8" fill="#b4b4b4"/></svg>
<span class="t" style="left:542.81px;top:349.00px;font-size:10px;color:#444;transform:scaleX(0.9671);transform-origin:0 0;">Columnas</span>
<svg class="b" style="left:398px;top:478px" width="10" height="8"><rect x="0.7" y="0" width="8.2" height="2" fill="#858585"/><rect x="0.7" y="2.6" width="8.2" height="2" fill="#b4b4b4"/><rect x="0.7" y="5.2" width="8.2" height="2" fill="#b4b4b4"/></svg>
<span class="t" style="left:413.27px;top:475.00px;font-size:10px;color:#444;transform:scaleX(0.8930);transform-origin:0 0;">Filas</span>
<svg class="b" style="left:528.5px;top:478px" width="9" height="9" viewBox="0 0 9 9"><path d="M7.6 1.6V0.5H0.8L4.2 4.2L0.8 8H7.8V6.8" fill="none" stroke="#808080" stroke-width="1"/></svg>
<span class="t" style="left:543.26px;top:475.00px;font-size:10px;color:#444;transform:scaleX(0.9188);transform-origin:0 0;">Valores</span>
</body></html>
